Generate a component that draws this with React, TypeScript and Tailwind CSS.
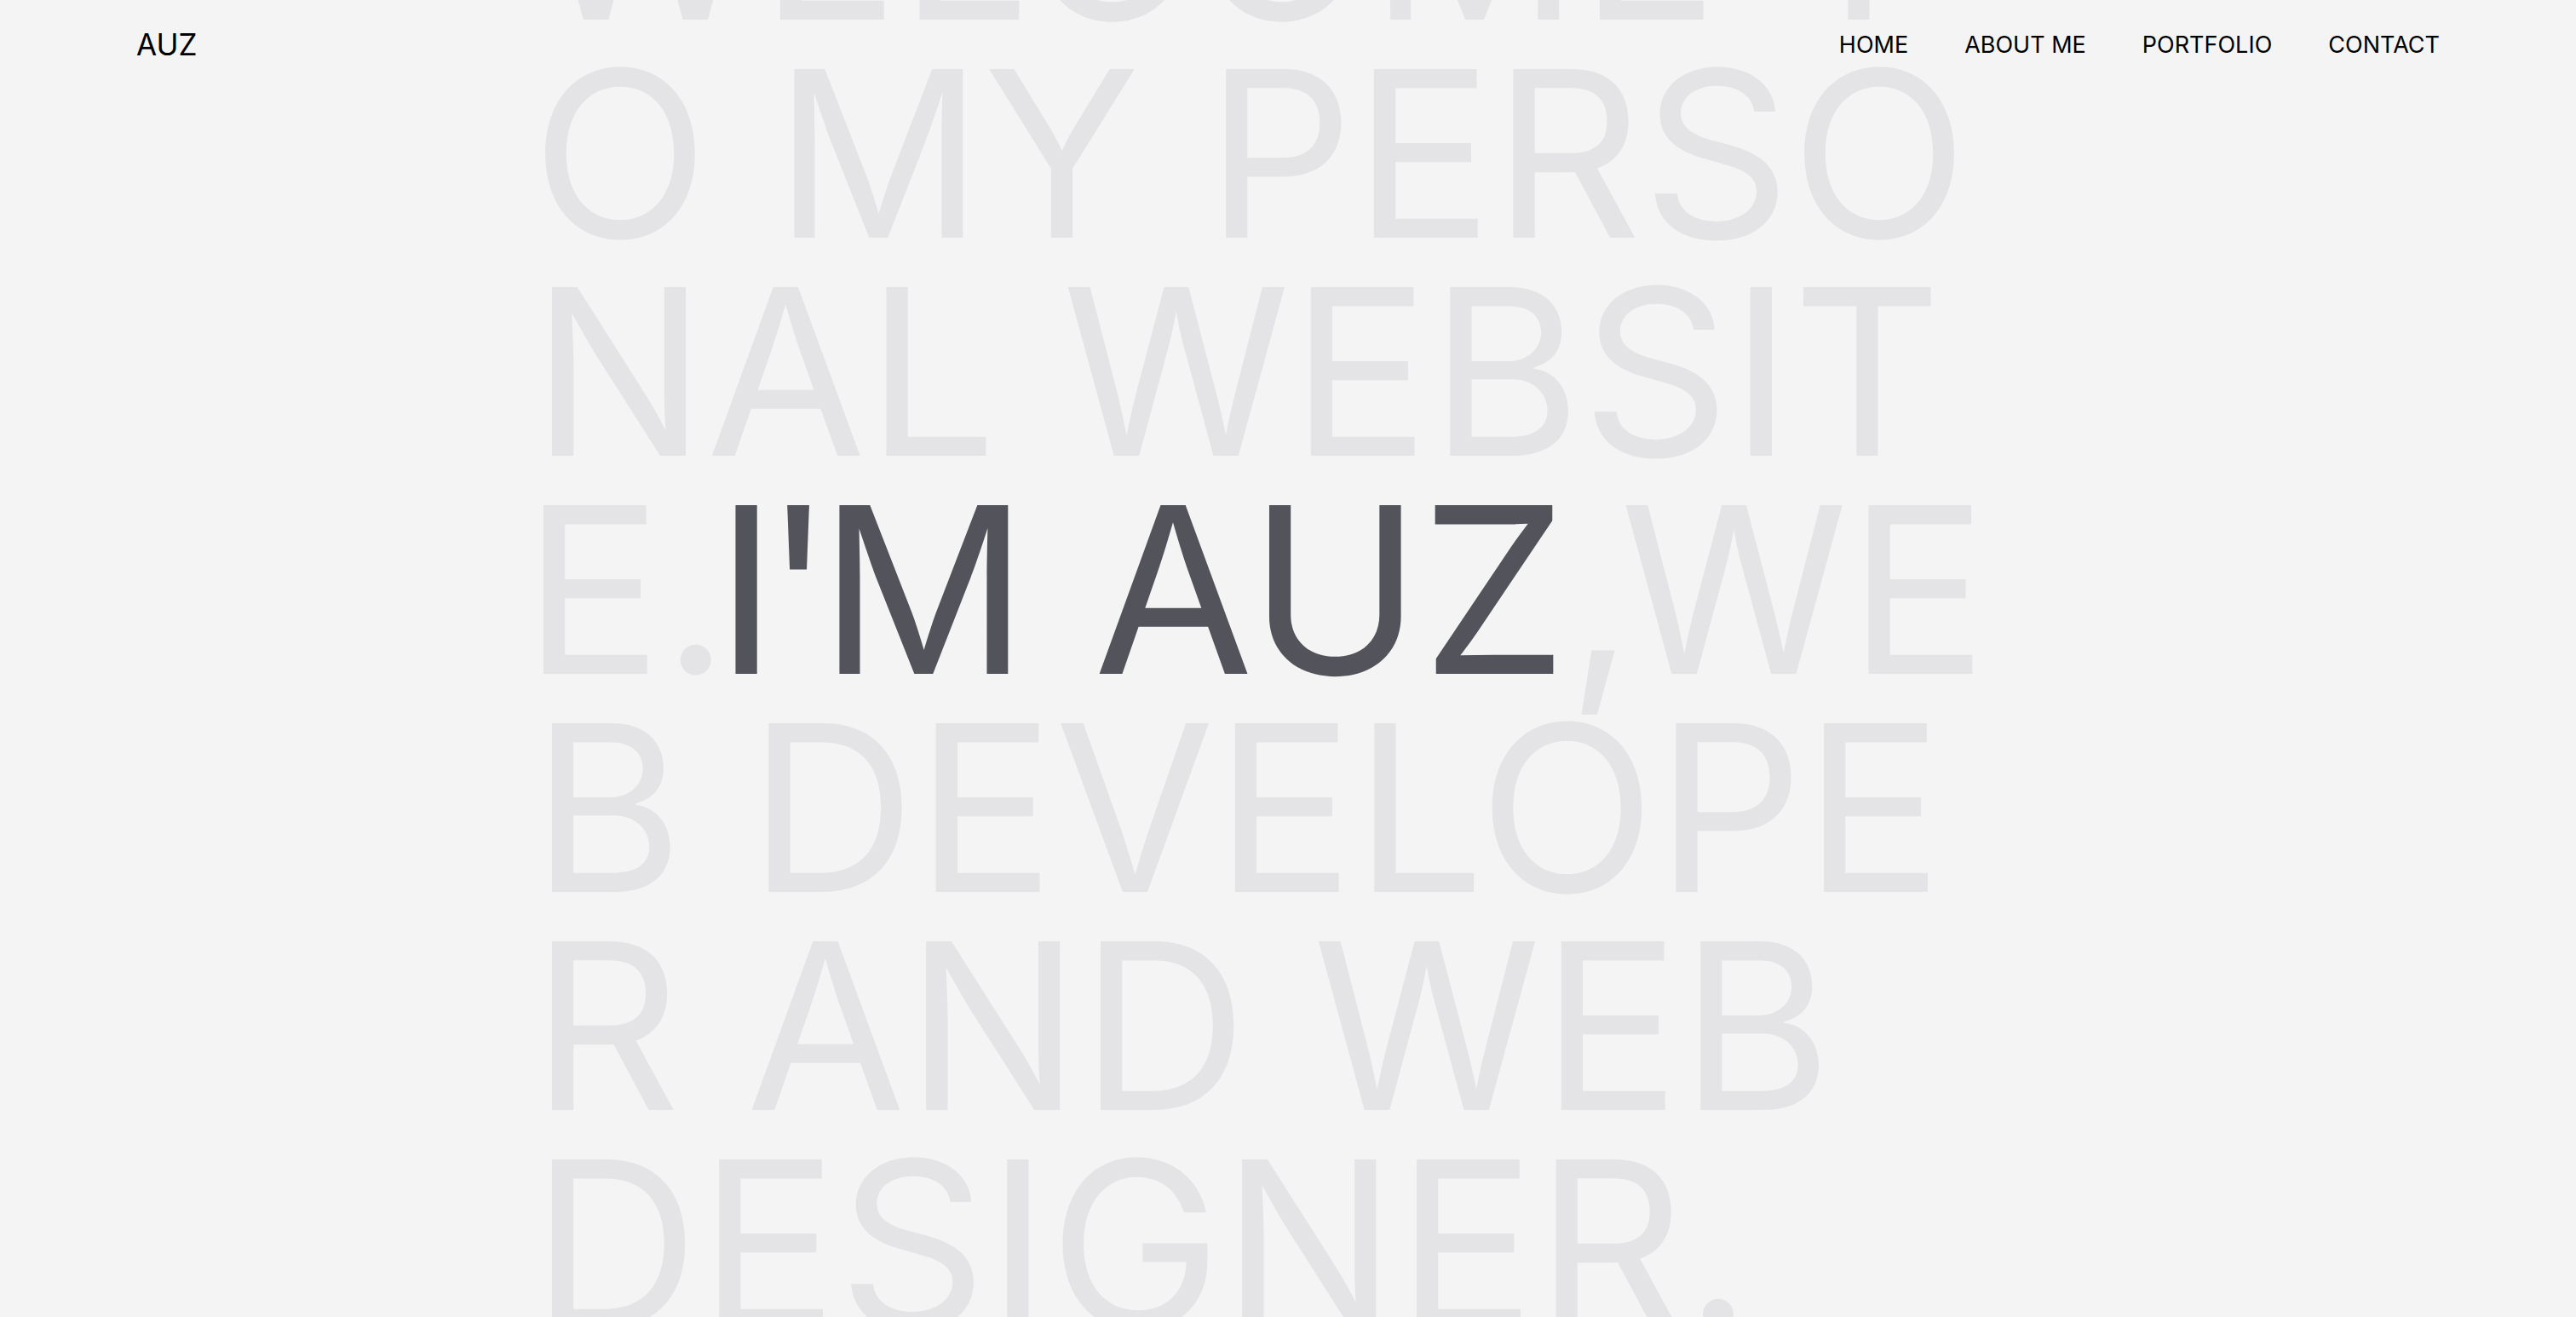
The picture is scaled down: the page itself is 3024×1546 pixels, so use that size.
const nav = ["HOME", "ABOUT ME", "PORTFOLIO", "CONTACT"];

const plain = ["WELCOME T", "O MY PERSO", "NAL WEBSIT"];
const rest = ["B DEVELOPE", "R AND WEB", "DESIGNER."];

export default function App() {
  return (
    <div className="relative h-screen overflow-hidden bg-[#f4f4f4] font-['Inter',sans-serif]">
      {/* header sits on top of the big text */}
      <header className="absolute inset-x-0 top-0 z-10 flex h-[104px] items-center justify-between px-[160px]">
        <a className="text-[35px] leading-none text-black">AUZ</a>
        <nav className="flex items-center gap-[66px]">
          {nav.map((item) => (
            <a key={item} className="text-[27px] leading-none text-black">
              {item}
            </a>
          ))}
        </nav>
      </header>

      <main className="mt-[-204px] pl-[624px]">
        <h1 className="text-[272px] font-normal uppercase leading-[256px] tracking-normal text-[#e4e4e6]">
          {plain.map((t) => (
            <span key={t} className="block whitespace-pre">
              {t}
            </span>
          ))}
          <span className="-ml-[10px] block whitespace-pre">
            E<span className="tracking-[-0.06em]">.</span>
            <span className="text-[#53535b]">
              <span className="tracking-[-0.06em]">I</span>
              <span className="tracking-[-0.06em]">'</span>M AUZ
            </span>
            <span className="tracking-[-0.06em]">,</span>WE
          </span>
          {rest.map((t) => (
            <span key={t} className="block whitespace-pre">
              {t}
            </span>
          ))}
        </h1>
      </main>
    </div>
  );
}
